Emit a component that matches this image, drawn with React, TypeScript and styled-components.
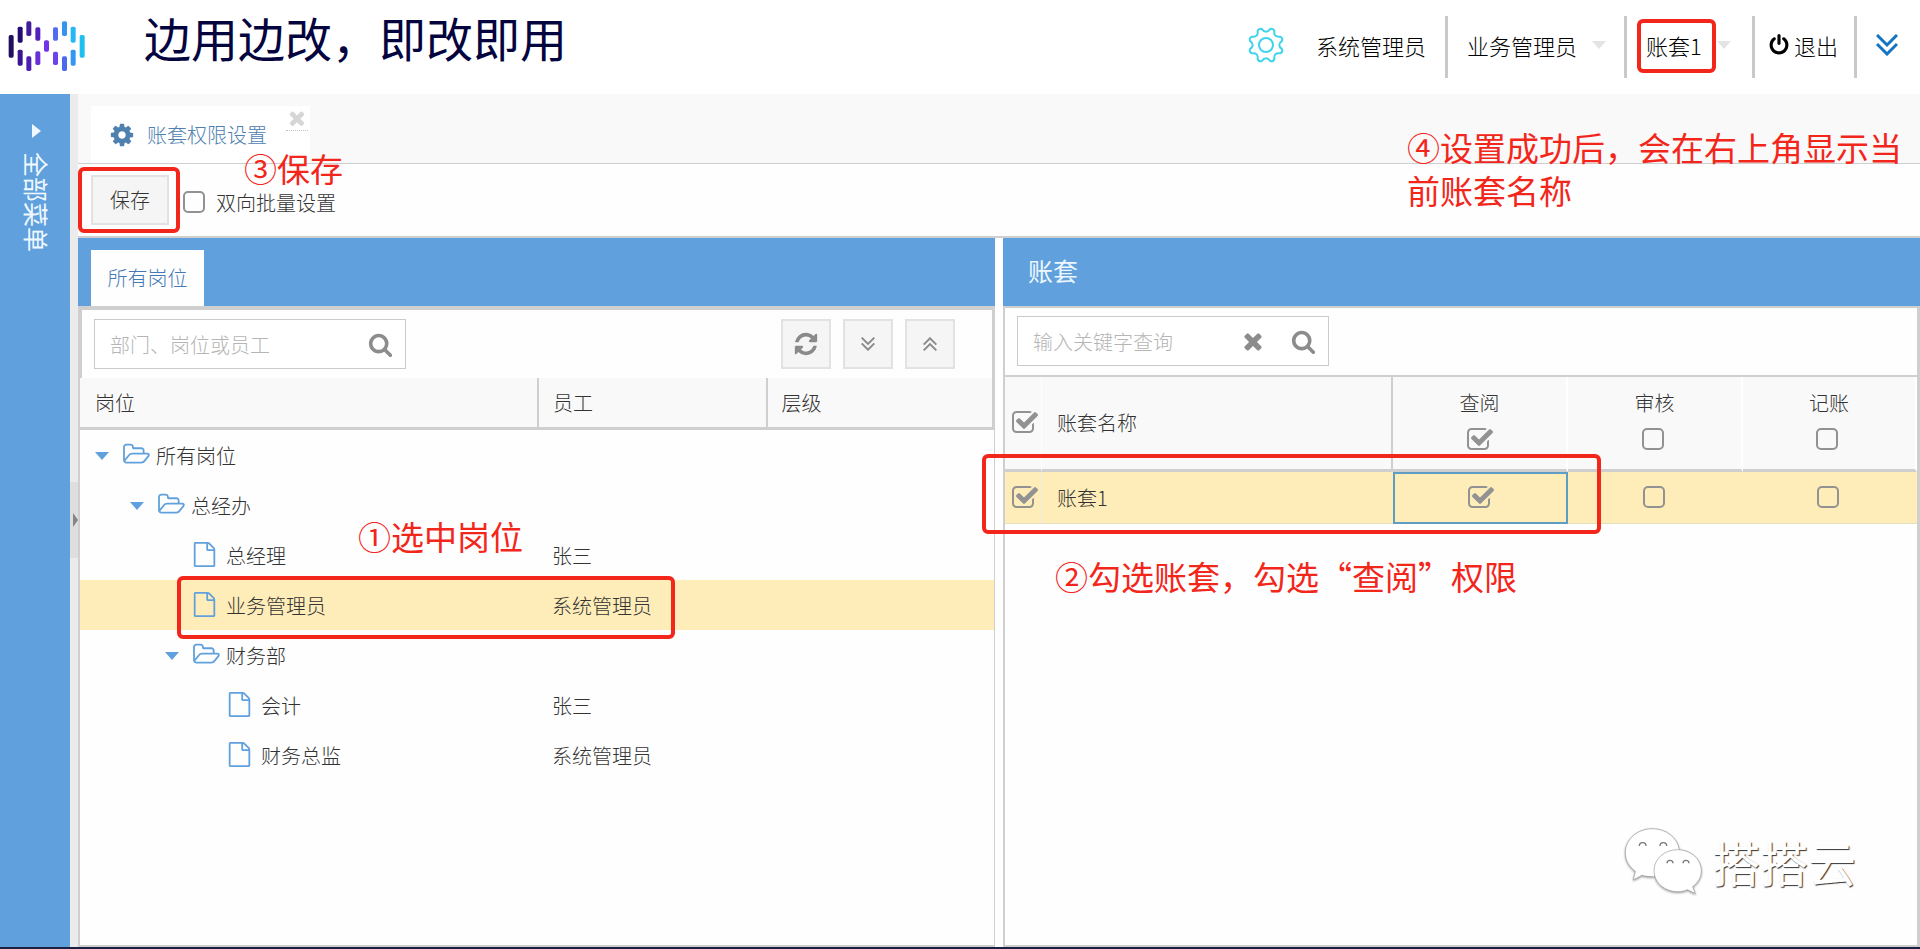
import React, { useState } from 'react';
import styled, { createGlobalStyle, css } from 'styled-components';

const BLUE = '#60a1dd';
const LINE = '#cfcfcf';
const RED = '#f3261b';
const PALE = '#f9f9f9';
const PICKED = '#feedb9';
const GREY = '#929292';

const Global = createGlobalStyle`
  *, *::before, *::after { box-sizing: border-box; }
  body {
    margin: 0;
    background: #fefefe;
    color: #333;
    font: 300 20px/28px "Noto Sans CJK SC", sans-serif;
  }
  button, input { font: inherit; color: inherit; }
`;

/* ---------- icons ---------- */

const GLYPHS = {
  cog: 'M1152 896q0-106-75-181t-181-75-181 75-75 181 75 181 181 75 181-75 75-181zm512-109v222q0 12-8 23t-20 13l-185 28q-19 54-39 91 35 50 107 138 10 12 10 25t-9 23q-27 37-99 108t-94 71q-12 0-26-9l-138-108q-44 23-91 38-16 136-29 186-7 28-36 28h-222q-14 0-24.5-8.5t-11.5-21.5l-28-184q-49-16-90-37l-141 107q-10 9-25 9-14 0-25-11-126-114-165-168-7-10-7-23 0-12 8-23 15-21 51-66.5t54-70.5q-27-50-41-99l-183-27q-13-2-21-12.5t-8-23.5v-222q0-12 8-23t19-13l186-28q14-46 39-92-40-57-107-138-10-12-10-24 0-10 9-23 26-36 98.5-107.5t94.5-71.5q13 0 26 10l138 107q44-23 91-38 16-136 29-186 7-28 36-28h222q14 0 24.5 8.5t11.5 21.5l28 184q49 16 90 37l142-107q9-9 24-9 13 0 25 10 129 119 165 170 7 8 7 22 0 12-8 23-15 21-51 66.5t-54 70.5q26 50 41 98l183 28q13 2 21 12.5t8 23.5z',
  times: 'M1490 1322q0 40-28 68l-136 136q-28 28-68 28t-68-28l-294-294-294 294q-28 28-68 28t-68-28l-136-136q-28-28-28-68t28-68l294-294-294-294q-28-28-28-68t28-68l136-136q28-28 68-28t68 28l294 294 294-294q28-28 68-28t68 28l136 136q28 28 28 68t-28 68l-294 294 294 294q28 28 28 68z',
  search: 'M1216 832q0-185-131.5-316.5t-316.5-131.5-316.5 131.5-131.5 316.5 131.5 316.5 316.5 131.5 316.5-131.5 131.5-316.5zm512 832q0 52-38 90t-90 38q-54 0-90-38l-343-342q-179 124-399 124-143 0-273.5-55.5t-225-150-150-225-55.5-273.5 55.5-273.5 150-225 225-150 273.5-55.5 273.5 55.5 225 150 150 225 55.5 273.5q0 220-124 399l343 343q37 37 37 90z',
  refresh: 'M1639 1056q0 5-1 7-64 268-268 434.5t-478 166.5q-146 0-282.5-55t-243.5-157l-129 129q-19 19-45 19t-45-19-19-45v-448q0-26 19-45t45-19h448q26 0 45 19t19 45-19 45l-137 137q71 66 161 102t187 36q134 0 250-65t186-179q11-17 53-117 8-23 30-23h192q13 0 22.5 9.5t9.5 22.5zm25-800v448q0 26-19 45t-45 19h-448q-26 0-45-19t-19-45 19-45l138-138q-148-137-349-137-134 0-250 65t-186 179q-11 17-53 117-8 23-30 23h-199q-13 0-22.5-9.5t-9.5-22.5v-7q65-268 270-434.5t480-166.5q146 0 284 55.5t245 156.5l130-129q19-19 45-19t45 19 19 45z',
  power: 'M1664 896q0 156-61 298t-164 245-245 164-298 61-298-61-245-164-164-245-61-298q0-182 80.5-343t226.5-270q43-32 95.5-25t83.5 50q32 42 24.5 94.5t-49.5 84.5q-98 74-151.5 181t-53.5 228q0 104 40.5 198.5t109.5 163.5 163.5 109.5 198.5 40.5 198.5-40.5 163.5-109.5 109.5-163.5 40.5-198.5q0-121-53.5-228t-151.5-181q-42-32-49.5-84.5t24.5-94.5q31-43 84-50t95 25q146 109 226.5 270t80.5 343zm-640-768v640q0 52-38 90t-90 38-90-38-38-90v-640q0-52 38-90t90-38 90 38 38 90z',
  file: 'M1596 380q28 28 48 76t20 88v1152q0 40-28 68t-68 28h-1344q-40 0-68-28t-28-68v-1600q0-40 28-68t68-28h896q40 0 88 20t76 48zm-444-244v376h376q-10-29-22-41l-313-313q-12-12-41-22zm384 1528v-1024h-416q-40 0-68-28t-28-68v-416h-768v1536h1280z',
  folder: 'M1845 931q0-35-53-35h-1088q-40 0-85.5 21.5t-71.5 52.5l-294 363q-18 24-18 40 0 35 53 35h1088q40 0 86-22t71-53l294-363q18-22 18-39zm-1141-163h768v-160q0-40-28-68t-68-28h-576q-40 0-68-28t-28-68v-64q0-40-28-68t-68-28h-320q-40 0-68 28t-28 68v853l256-315q44-53 116-87.5t140-34.5zm1269 163q0 62-46 120l-295 363q-43 53-116 87.5t-140 34.5h-1088q-92 0-158-66t-66-158v-960q0-92 66-158t158-66h320q92 0 158 66t66 158v32h544q92 0 158 66t66 158v160h192q54 0 99 24.5t67 70.5q15 32 15 68z',
  checked: 'M1472 930v318q0 119-84.5 203.5t-203.5 84.5h-832q-119 0-203.5-84.5t-84.5-203.5v-832q0-119 84.5-203.5t203.5-84.5h832q63 0 117 25 15 7 18 23 3 17-9 29l-49 49q-10 10-23 10-3 0-9-2-23-6-45-6h-832q-66 0-113 47t-47 113v832q0 66 47 113t113 47h832q66 0 113-47t47-113v-254q0-13 9-22l64-64q10-10 23-10 6 0 12 3 20 8 20 29zm231-489l-814 814q-24 24-57 24t-57-24l-430-430q-24-24-24-57t24-57l110-110q24-24 57-24t57 24l263 263 647-647q24-24 57-24t57 24l110 110q24 24 24 57t-24 57z',
};

type GlyphName = keyof typeof GLYPHS;

const Svg = styled.svg`
  display: block;
  flex: none;
`;

function Glyph({ name, size, color = 'currentColor' }: { name: GlyphName; size: number; color?: string }) {
  const wide = name === 'folder';
  return (
    <Svg
      width={wide ? Math.round((size * 8) / 7) : size}
      height={size}
      viewBox={wide ? '0 0 2048 1792' : '0 0 1792 1792'}
      fill={color}
      aria-hidden="true"
    >
      <path d={GLYPHS[name]} />
    </Svg>
  );
}

function DoubleChevron({ size, up = false, weight = 2 }: { size: number; up?: boolean; weight?: number }) {
  return (
    <Svg width={size} height={size} viewBox="0 0 22 22" fill="none" stroke="currentColor" strokeWidth={weight} aria-hidden="true">
      {up ? <path d="M1 12l10-10 10 10M1 21l10-10 10 10" /> : <path d="M1 1l10 10 10-10M1 10l10 10 10-10" />}
    </Svg>
  );
}

const BARS: [number, number, number, string][] = [
  [33, 105, 173, '#22105f'],
  [60, 80, 128, '#250c72'],
  [60, 149, 197, '#3a1791'],
  [86, 64, 108, '#431c9c'],
  [86, 169, 213, '#4d20b4'],
  [113, 82, 122, '#5222bd'],
  [113, 154, 195, '#6a2fdb'],
  [139, 121, 155, '#7235e6'],
  [166, 82, 122, '#4f6df0'],
  [166, 155, 195, '#6a43ec'],
  [193, 64, 108, '#3794ee'],
  [193, 169, 213, '#4b68f3'],
  [219, 80, 128, '#28b7f5'],
  [219, 149, 197, '#3197f2'],
  [246, 105, 173, '#1fbff0'],
];

function Logo() {
  return (
    <Svg width="90" height="94" viewBox="0 0 270 282" role="img" aria-label="logo">
      {BARS.map(([x, top, bottom, color]) => (
        <rect key={`${x}-${top}`} x={x - 7} y={top} width="15" height={bottom - top} rx="5" fill={color} />
      ))}
    </Svg>
  );
}

function GearOutline() {
  const teeth = Array.from({ length: 8 }, (_, i) => i * 45 + 22.5);
  const at = (deg: number, r: number) => {
    const a = ((deg - 90) * Math.PI) / 180;
    return `${(18 + r * Math.cos(a)).toFixed(2)} ${(18 + r * Math.sin(a)).toFixed(2)}`;
  };
  const d = teeth
    .map((t, i) => `${i ? 'L' : 'M'}${at(t - 8, 16.5)}Q${at(t, 18.5)} ${at(t + 8, 16.5)}Q${at(t + 22.5, 10.5)} ${at(t + 37, 16.5)}`)
    .join('');
  return (
    <Svg width="36" height="36" viewBox="0 0 36 36" fill="none" stroke="#3fd3ec" strokeWidth="2" strokeLinejoin="round" aria-hidden="true">
      <path d={`${d}Z`} />
      <circle cx="18" cy="18" r="7" />
    </Svg>
  );
}

/* ---------- shared parts ---------- */

const Callout = styled.span<{ $t: number; $r: number; $b: number; $l: number }>`
  position: absolute;
  z-index: 3;
  inset: ${(p) => `${p.$t}px ${p.$r}px ${p.$b}px ${p.$l}px`};
  border: 4px solid ${RED};
  border-radius: 6px;
  pointer-events: none;
`;

const Note = styled.p<{ $top: number; $left?: number; $right?: number; $width?: number }>`
  position: absolute;
  z-index: 3;
  top: ${(p) => p.$top}px;
  ${(p) => (p.$right === undefined ? `left: ${p.$left}px;` : `right: ${p.$right}px;`)}
  ${(p) => (p.$width ? `width: ${p.$width}px; line-height: 43px;` : 'white-space: nowrap; line-height: 34px;')}
  margin: 0;
  color: ${RED};
  font-size: 33px;
  font-weight: 400;
  pointer-events: none;
`;

const Stack = styled.span`
  display: inline-grid;
  width: 28px;
  height: 28px;
  color: ${GREY};
  > * { grid-area: 1 / 1; }
`;

const Tick = styled.input`
  appearance: none;
  width: 28px;
  height: 28px;
  margin: 0;
  cursor: pointer;
`;

function Check({ id, label, initial = false }: { id?: string; label?: string; initial?: boolean }) {
  const [on, setOn] = useState(initial);
  return (
    <Stack>
      {on ? (
        <Glyph name="checked" size={28} />
      ) : (
        <Svg width="28" height="28" viewBox="0 0 28 28" fill="none" stroke="currentColor" strokeWidth="2" aria-hidden="true">
          <rect x="2" y="3" width="20" height="20" rx="4" />
        </Svg>
      )}
      <Tick type="checkbox" id={id} aria-label={label} checked={on} onChange={(e) => setOn(e.target.checked)} />
    </Stack>
  );
}

/* ---------- page frame ---------- */

const Page = styled.div`
  display: flex;
  flex-direction: column;
  min-height: 100vh;
  border-bottom: 2px solid #1b2140;
`;

const Header = styled.header`
  display: flex;
  align-items: center;
  height: 94px;
  background: #fff;
`;

const Slogan = styled.h1`
  flex: 1;
  margin: 0 0 20px 54px;
  color: #04043f;
  font-size: 47px;
  line-height: 60px;
  font-weight: 400;
  white-space: nowrap;
`;

const Account = styled.nav`
  display: flex;
  align-items: center;
  height: 62px;
  color: #000;
  font-size: 22px;
  white-space: nowrap;
`;

const User = styled.span`
  display: flex;
  align-items: center;
  gap: 32px;
  margin-right: 19px;
  padding-bottom: 4px;
`;

const Divided = styled.div<{ $width: number; $tight?: boolean }>`
  display: flex;
  align-items: center;
  height: 62px;
  width: ${(p) => p.$width}px;
  padding: 0 0 4px ${(p) => (p.$tight ? 13 : 19)}px;
  border-left: 3px solid #c9c9c9;
`;

const Plain = styled.button`
  position: relative;
  display: flex;
  align-items: center;
  gap: 4px;
  padding: 0;
  border: 0;
  background: none;
  white-space: nowrap;
  cursor: pointer;
`;

const Caret = styled.span<{ $size: number; $color: string }>`
  flex: none;
  width: ${(p) => p.$size * 2}px;
  border: ${(p) => p.$size}px solid transparent;
  border-top: ${(p) => p.$size + 1}px solid ${(p) => p.$color};
  border-bottom: 0;
`;

const DropCaret = styled(Caret)`
  margin-left: 15px;
`;

const Expand = styled(Plain)`
  color: #1474c4;
`;

const Body = styled.div`
  flex: 1;
  display: flex;
`;

const Sidebar = styled.aside`
  display: flex;
  flex-direction: column;
  align-items: center;
  gap: 14px;
  width: 70px;
  padding: 30px 0 0 3px;
  background: ${BLUE};
  color: #f0f8ff;
  font-size: 25px;
`;

const SideArrow = styled.span`
  border: 7px solid transparent;
  border-left: 9px solid #f0f8ff;
  border-right: 0;
`;

const SideTitle = styled.span`
  writing-mode: vertical-rl;
  text-orientation: sideways;
  font-weight: 400;
`;

const Splitter = styled.div`
  display: flex;
  align-items: center;
  width: 8px;
  padding-bottom: 2px;
  background: #ebebeb;
`;

const Handle = styled.button`
  width: 8px;
  height: 76px;
  padding: 0 0 0 3px;
  border: 0;
  background: #dedede;
  &::after {
    content: '';
    display: block;
    border: 7px solid transparent;
    border-left: 5px solid #858585;
    border-right: 0;
  }
`;

const Main = styled.main`
  position: relative;
  flex: 1;
  min-width: 0;
  display: flex;
  flex-direction: column;
`;

const Tabs = styled.div`
  display: flex;
  align-items: flex-end;
  height: 70px;
  padding-left: 13px;
  border-bottom: 1px solid ${LINE};
  background: ${PALE};
`;

const PageTab = styled.div`
  display: flex;
  align-items: center;
  width: 219px;
  height: 57px;
  padding-left: 18px;
  gap: 12px;
  background: #fff;
  color: #4e80b0;
`;

const CloseTab = styled.button`
  align-self: flex-start;
  width: 22px;
  height: 25px;
  margin-left: 7px;
  padding: 0;
  border: 0;
  border-bottom: 1px dotted #c4c4c4;
  background: none;
`;

const Toolbar = styled.div`
  display: flex;
  align-items: center;
  height: 74px;
  padding: 0 13px;
  border-bottom: 2px solid ${LINE};
`;

const Save = styled.button`
  position: relative;
  width: 78px;
  height: 50px;
  margin-right: 13px;
  border: 2px solid #e2e2e2;
  background: #f5f5f5;
  cursor: pointer;
`;

const Batch = styled.div`
  display: flex;
  align-items: center;
  gap: 6px;
  padding-top: 6px;
`;

/* ---------- panels ---------- */

const Panels = styled.div`
  flex: 1;
  display: flex;
  gap: 8px;
`;

const Panel = styled.section`
  position: relative;
  flex: 1;
  min-width: 0;
  display: flex;
  flex-direction: column;
`;

const PanelHead = styled.div`
  display: flex;
  align-items: center;
  height: 68px;
  padding: 0 13px;
  background: ${BLUE};
`;

const PanelTitle = styled.h2`
  margin: 0 0 4px 12px;
  color: #eef7ff;
  font-size: 25px;
  line-height: 36px;
  font-weight: 400;
`;

const PanelTab = styled.button`
  align-self: flex-end;
  width: 113px;
  height: 56px;
  padding: 0;
  border: 0;
  background: #fefefe;
  color: #4579b4;
`;

const PanelBody = styled.div<{ $left?: boolean }>`
  flex: 1;
  border: 2px solid ${LINE};
  border-width: ${(p) => (p.$left ? '2px 1px 2px 2px' : '2px 3px 2px 2px')};
`;

const Filter = styled.div<{ $framed?: boolean }>`
  display: flex;
  align-items: center;
  gap: 12px;
  ${(p) =>
    p.$framed
      ? css`
          height: 70px;
          padding: 0 37px 0 12px;
          border: 2px solid ${LINE};
          border-bottom: 0;
        `
      : css`
          height: 69px;
          padding: 0 12px 1px;
          border-bottom: 2px solid ${LINE};
        `}
`;

const SearchBox = styled.div`
  display: flex;
  align-items: center;
  gap: 25px;
  width: 312px;
  height: 50px;
  padding: 0 12px 0 15px;
  border: 1px solid #cbcbcb;
  background: #fff;
  color: #8c8c8c;
`;

const SearchInput = styled.input`
  flex: 1;
  min-width: 0;
  padding: 2px 0 0;
  border: 0;
  outline: 0;
  background: none;
  &::placeholder { color: #b5b5b5; opacity: 1; }
`;

const Spacer = styled.span`
  flex: 1;
`;

const Square = styled.button`
  display: grid;
  place-items: center;
  width: 50px;
  height: 50px;
  padding: 0;
  border: 2px solid #e2e2e2;
  background: #f5f5f5;
  color: #8a8a8a;
`;

const Table = styled.table`
  width: 100%;
  table-layout: fixed;
  border-collapse: separate;
  border-spacing: 0;
`;

const TreeHead = styled.th`
  height: 52px;
  padding: 0 15px;
  border-bottom: 3px solid ${LINE};
  background: ${PALE};
  font-weight: 300;
  text-align: left;
  & + & { border-left: 2px solid ${LINE}; padding-left: 14px; }
  &:last-child { border-right: 2px solid ${LINE}; }
`;

const TreeRow = styled.tr<{ $picked?: boolean }>`
  position: relative;
  background: ${(p) => (p.$picked ? PICKED : 'transparent')};
`;

const TreeCell = styled.td<{ $level?: number }>`
  height: 50px;
  padding: 1px 0 0 ${(p) => 15 + (p.$level ?? 0) * 35}px;
`;

const Node = styled.span`
  display: flex;
  align-items: center;
`;

const CaretSlot = styled.span`
  width: 27px;
`;

const IconSlot = styled.span`
  display: flex;
  width: 34px;
  padding-bottom: 3px;
`;

const GridHead = styled.th<{ $kind?: 'tick' | 'name' | 'right' }>`
  height: 95px;
  padding: 0;
  border-bottom: 3px solid ${LINE};
  background: ${PALE};
  font-weight: 300;
  ${(p) => p.$kind === 'tick' && 'border-right: 1px solid #fff; padding-left: 6px; text-align: left;'}
  ${(p) => p.$kind === 'name' && `border-right: 2px solid ${LINE}; padding-left: 15px; text-align: left;`}
  ${(p) => p.$kind === 'right' && 'border-right: 2px solid #fff;'}
`;

const Right = styled.span`
  display: flex;
  flex-direction: column;
  align-items: center;
  gap: 9px;
  padding-bottom: 4px;
`;

const GridCell = styled.td<{ $kind?: 'tick' | 'name'; $focus?: boolean }>`
  height: 52px;
  padding: 0;
  border-bottom: 1px solid #e6dfc0;
  background: ${PICKED};
  text-align: center;
  ${(p) => p.$kind === 'tick' && 'border-right: 1px solid #ececdf; padding-left: 6px; text-align: left;'}
  ${(p) => p.$kind === 'name' && 'padding-left: 15px; text-align: left;'}
  ${(p) => p.$focus && 'border: 2px solid #5f9dc4;'}
`;

const CellInner = styled.span`
  display: flex;
  align-items: center;
`;

const Centred = styled(CellInner)`
  justify-content: center;
`;

const Watermark = styled.div`
  position: absolute;
  right: 64px;
  bottom: 51px;
  display: flex;
  align-items: center;
  gap: 8px;
  color: #fff;
  font-size: 48px;
  line-height: 70px;
  font-weight: 400;
  text-shadow: 1px 1px 1px #333;
`;

const Bubbles = styled(Svg)`
  filter: drop-shadow(0 1px 1px #999);
`;

/* ---------- data ---------- */

type Post = { name: string; level: number; folder?: boolean; staff?: string; picked?: boolean };

const POSTS: Post[] = [
  { name: '所有岗位', level: 0, folder: true },
  { name: '总经办', level: 1, folder: true },
  { name: '总经理', level: 2, staff: '张三' },
  { name: '业务管理员', level: 2, staff: '系统管理员', picked: true },
  { name: '财务部', level: 2, folder: true },
  { name: '会计', level: 3, staff: '张三' },
  { name: '财务总监', level: 3, staff: '系统管理员' },
];

const RIGHTS = [
  { name: '查阅', on: true },
  { name: '审核', on: false },
  { name: '记账', on: false },
];

function PostTree() {
  return (
    <Table>
      <colgroup>
        <col width="50%" />
        <col width="25%" />
        <col width="25%" />
      </colgroup>
      <thead>
        <tr>
          <TreeHead scope="col">岗位</TreeHead>
          <TreeHead scope="col">员工</TreeHead>
          <TreeHead scope="col">层级</TreeHead>
        </tr>
      </thead>
      <tbody>
        {POSTS.map((p) => (
          <TreeRow key={p.name} $picked={p.picked}>
            <TreeCell $level={p.level}>
              <Node>
                <CaretSlot>{p.folder && <Caret as="div" $size={7} $color={BLUE} />}</CaretSlot>
                <IconSlot>
                  <Glyph name={p.folder ? 'folder' : 'file'} size={25} color={BLUE} />
                </IconSlot>
                {p.name}
              </Node>
              {p.picked && <Callout $t={-4} $r={319} $b={-9} $l={97} />}
            </TreeCell>
            <TreeCell>{p.staff}</TreeCell>
            <TreeCell />
          </TreeRow>
        ))}
      </tbody>
    </Table>
  );
}

function BookGrid() {
  return (
    <Table>
      <colgroup>
        <col width="37" />
        <col />
        <col width="175" />
        <col width="175" />
        <col width="174" />
      </colgroup>
      <thead>
        <tr>
          <GridHead scope="col" $kind="tick">
            <CellInner><Check label="全选" initial /></CellInner>
          </GridHead>
          <GridHead scope="col" $kind="name">账套名称</GridHead>
          {RIGHTS.map((r) => (
            <GridHead key={r.name} scope="col" $kind="right">
              <Right>
                {r.name}
                <Check label={`全部${r.name}`} initial={r.on} />
              </Right>
            </GridHead>
          ))}
        </tr>
      </thead>
      <tbody>
        <tr>
          <GridCell $kind="tick">
            <CellInner><Check label="账套1" initial /></CellInner>
          </GridCell>
          <GridCell $kind="name">账套1</GridCell>
          {RIGHTS.map((r) => (
            <GridCell key={r.name} $focus={r.on}>
              <Centred><Check label={`账套1 ${r.name}`} initial={r.on} /></Centred>
            </GridCell>
          ))}
        </tr>
      </tbody>
    </Table>
  );
}

export default function App() {
  return (
    <Page>
      <Global />
      <Header>
        <Logo />
        <Slogan>边用边改，即改即用</Slogan>
        <Account>
          <User>
            <GearOutline />
            系统管理员
          </User>
          <Divided $width={179}>
            <Plain>业务管理员</Plain>
            <DropCaret $size={7} $color="#e4e4e4" />
          </Divided>
          <Divided $width={128}>
            <Plain>
              账套1
              <Callout $t={-12} $r={-14} $b={-14} $l={-9} />
            </Plain>
            <DropCaret $size={7} $color="#e4e4e4" />
          </Divided>
          <Divided $width={102} $tight>
            <Plain>
              <Glyph name="power" size={22} />
              退出
            </Plain>
          </Divided>
          <Divided $width={66}>
            <Expand aria-label="展开"><DoubleChevron size={22} weight={3} /></Expand>
          </Divided>
        </Account>
      </Header>
      <Body>
        <Sidebar>
          <SideArrow />
          <SideTitle>全部菜单</SideTitle>
        </Sidebar>
        <Splitter><Handle aria-label="折叠菜单" /></Splitter>
        <Main>
          <Tabs>
            <PageTab>
              <Glyph name="cog" size={26} />
              账套权限设置
              <CloseTab aria-label="关闭"><Glyph name="times" size={22} color="#d6d6d6" /></CloseTab>
            </PageTab>
          </Tabs>
          <Toolbar>
            <Save>
              保存
              <Callout $t={-10} $r={-13} $b={-10} $l={-15} />
            </Save>
            <Batch>
              <Check id="batch" />
              <label htmlFor="batch">双向批量设置</label>
            </Batch>
          </Toolbar>
          <Note $top={57} $left={166}>③保存</Note>
          <Note $top={32} $right={17} $width={496}>④设置成功后，会在右上角显示当前账套名称</Note>
          <Panels>
            <Panel>
              <PanelHead>
                <PanelTab>所有岗位</PanelTab>
              </PanelHead>
              <PanelBody $left>
                <Filter $framed>
                  <SearchBox>
                    <SearchInput type="text" placeholder="部门、岗位或员工" aria-label="部门、岗位或员工" />
                    <Glyph name="search" size={25} />
                  </SearchBox>
                  <Spacer />
                  <Square aria-label="刷新"><Glyph name="refresh" size={26} /></Square>
                  <Square aria-label="全部展开"><DoubleChevron size={14} weight={3} /></Square>
                  <Square aria-label="全部收起"><DoubleChevron size={14} weight={3} up /></Square>
                </Filter>
                <PostTree />
              </PanelBody>
              <Note $top={281} $left={280}>①选中岗位</Note>
            </Panel>
            <Panel>
              <PanelHead>
                <PanelTitle>账套</PanelTitle>
              </PanelHead>
              <PanelBody>
                <Filter>
                  <SearchBox>
                    <SearchInput type="text" placeholder="输入关键字查询" aria-label="输入关键字查询" />
                    <Glyph name="times" size={26} />
                    <Glyph name="search" size={25} />
                  </SearchBox>
                </Filter>
                <BookGrid />
              </PanelBody>
              <Callout as="div" $t={216} $r={319} $b={413} $l={-21} />
              <Note $top={321} $left={52}>②勾选账套，勾选“查阅”权限</Note>
              <Watermark>
                <Bubbles width="80" height="70" viewBox="0 0 240 210" fill="#fff" stroke="#999" strokeWidth="2" aria-hidden="true">
                  <path d="M166 71C160 34 126 8 85 8 40 8 4 40 4 80c0 26 14 44 30 56l-6 26 26-14c10 3 20 4 34 4" />
                  <path d="M90 134c0-36 32-63 71-63s71 28 71 63c0 20-10 36-26 48l8 21-24-12c-8 4-18 6-29 6-40 0-71-28-71-63z" />
                  <path d="M46 60a10 10 0 0 1 20 0M108 60a10 10 0 0 1 20 0M129 112a9 9 0 0 1 18 0M177 112a9 9 0 0 1 18 0" fill="none" stroke="#777" strokeWidth="4" />
                </Bubbles>
                搭搭云
              </Watermark>
            </Panel>
          </Panels>
        </Main>
      </Body>
    </Page>
  );
}
